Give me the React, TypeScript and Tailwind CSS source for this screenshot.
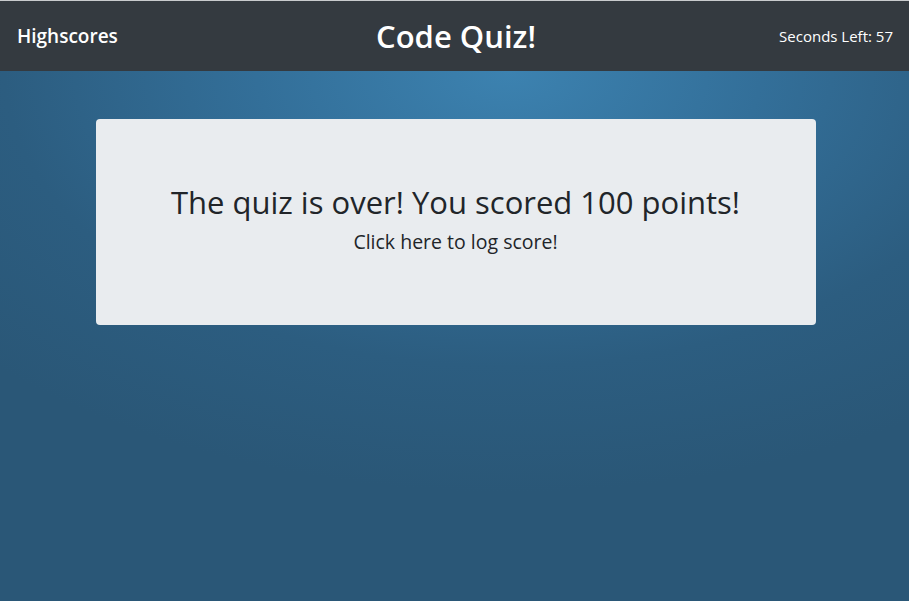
const App = () => {
  return (
    <div
      className="flex min-h-[601px] flex-col bg-[#2a5777] bg-[radial-gradient(ellipse_720px_420px_at_56%_12%,#3c82b0_0%,#336f99_35%,#2c5d80_70%,#2a5777_100%)]"
      style={{ fontFamily: '"Open Sans", "Noto Sans", sans-serif' }}>
      <nav className="grid h-[71px] grid-cols-3 items-center border-t border-[#c9cbcd] bg-[#343a40] px-[16px] text-white">
        <a className="justify-self-start pl-[1px] text-[19px] font-semibold leading-none" href="#">
          Highscores
        </a>
        <h1 className="justify-self-center pl-[3px] text-[31px] font-semibold leading-none">
          Code Quiz!
        </h1>
        <span className="justify-self-end text-[15px] leading-none">
          Seconds Left: 57
        </span>
      </nav>
      <main className="flex justify-center pl-[2px] pt-[48px]">
        <section className="flex h-[206px] w-[720px] flex-col items-center justify-center rounded-[4px] bg-[#e9ecef] pb-[4px] text-[#212529]">
          <h2 className="mb-[6px] text-[31px] font-medium leading-[38px]">
            The quiz is over! You scored 100 points!
          </h2>
          <p className="text-[19.5px] font-medium leading-[30px]">
            Click here to log score!
          </p>
        </section>
      </main>
    </div>
  );
};

export default App;
